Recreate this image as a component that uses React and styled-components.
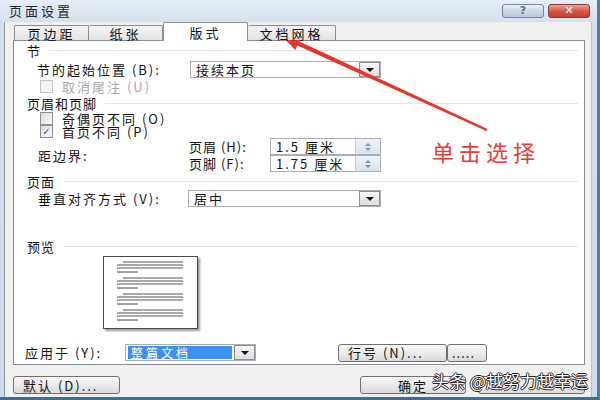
import React from 'react';
import styled, { createGlobalStyle } from 'styled-components';

const GlobalStyle = createGlobalStyle`
  body {
    margin: 0;
    font-family: "Noto Sans CJK SC", "Liberation Sans", sans-serif;
    color: #111;
    line-height: 1.1;
  }
`

const Window = styled.div`
  position: relative;
  width: 600px;
  height: 400px;
  box-sizing: border-box;
  display: flex;
  flex-direction: column;
  overflow: hidden;
  background: linear-gradient(#e6eef7, #d4e0ec 24px, #cfdbe8);
  border-right: 3px solid #4d7fa6;
  border-bottom: 3px solid #3c6e92;
`
const TitleBar = styled.div`
  flex: none;
  height: 22px;
  display: flex;
  align-items: center;
  padding: 0 7px 0 9px;
`
const Title = styled.span`
  flex: 1;
  font-size: 13px;
  letter-spacing: 3px;
  color: #1b2633;
`
const CaptionButton = styled.div`
  width: 40px;
  height: 12px;
  margin-left: 4px;
  display: flex;
  align-items: center;
  justify-content: center;
  border: 1px solid ${p => p.$close ? '#8a3a30' : '#71859a'};
  border-radius: 3px;
  background: ${p => p.$close
    ? 'linear-gradient(#eaa497, #d35b48 50%, #c23f2c)'
    : 'linear-gradient(#eef3f8, #cbd8e6 50%, #b9c9db)'};
  color: ${p => p.$close ? '#fff' : '#5d6f84'};
  font: bold 11px/12px "DejaVu Sans", sans-serif;
`
const Client = styled.div`
  flex: 1;
  display: flex;
  flex-direction: column;
  margin: 0 5px 0 4px;
  padding: 0 6px 0 8px;
  background: #f0f0f0;
  border-left: 1px solid #8d949c;
  border-right: 1px solid #b9c3cd;
`
const TabStrip = styled.div`
  display: flex;
  align-items: flex-end;
  height: 18px;
  padding-left: 1px;
  position: relative;
  z-index: 1;
`
const Tab = styled.div`
  width: ${p => p.$w}px;
  height: ${p => p.$active ? 19 : 15}px;
  margin-bottom: ${p => p.$active ? -1 : 0}px;
  box-sizing: border-box;
  display: flex;
  align-items: center;
  justify-content: center;
  border: 1px solid #898c95;
  border-bottom: none;
  border-left-width: ${p => p.$first || p.$active ? 1 : 0}px;
  border-radius: 2px 2px 0 0;
  background: ${p => p.$active ? '#fff' : 'linear-gradient(#f4f4f4, #e3e3e3)'};
  font-size: 13px;
  line-height: 13px;
  letter-spacing: 3px;
  padding-top: ${p => p.$active ? 0 : 1}px;
`
const Panel = styled.div`
  height: 325px;
  box-sizing: border-box;
  display: flex;
  flex-direction: column;
  padding: 2px 6px 0 13px;
  background: #fff;
  border: 1px solid #898c95;
`
const SectionHeader = styled.div`
  display: flex;
  align-items: center;
  height: 14px;
  margin-top: ${p => p.$top || 0}px;
  font-size: 13px;
  line-height: 13px;
  letter-spacing: 1px;
  &::after {
    content: '';
    flex: 1;
    height: 1px;
    margin-left: 8px;
    background: #dfe4e8;
  }
`
const Row = styled.div`
  display: flex;
  align-items: center;
  height: ${p => p.$h}px;
  margin-top: ${p => p.$top || 0}px;
  padding-left: ${p => p.$indent || 0}px;
  margin-left: ${p => p.$shift || 0}px;
`
const Label = styled.span`
  flex: none;
  width: ${p => p.$w ? `${p.$w}px` : 'auto'};
  font-size: 13px;
  line-height: 13px;
  letter-spacing: ${p => p.$ls ?? 2}px;
  white-space: nowrap;
  color: ${p => p.$disabled ? '#a7a7a7' : '#111'};
`
const CheckBox = styled.span`
  flex: none;
  width: 11px;
  height: 11px;
  margin: 0 9px 0 3px;
  display: flex;
  align-items: center;
  justify-content: center;
  border: 1px solid ${p => p.$disabled ? '#c4c4c4' : '#8e8f8f'};
  background: ${p => p.$disabled ? '#f4f4f4' : 'linear-gradient(135deg, #dcdcdc, #fbfbfb)'};
  color: #3b579a;
  font: bold 10px/11px "DejaVu Sans", sans-serif;
`
const Combo = styled.div`
  flex: none;
  display: flex;
  align-items: center;
  width: ${p => p.$w}px;
  height: 17px;
  box-sizing: border-box;
  border: 1px solid #a9adb4;
  background: #fff;
`
const ComboText = styled.span`
  flex: 1;
  padding-left: 5px;
  font-size: 13px;
  line-height: 13px;
  letter-spacing: 2px;
  white-space: nowrap;
`
const Selected = styled.span`
  flex: 1;
  align-self: stretch;
  margin: 1px 2px;
  padding-left: 3px;
  background: #3d8ff0;
  color: #fff;
  font-size: 12px;
  letter-spacing: 3px;
  line-height: 13px;
  white-space: nowrap;
`
const DropButton = styled.span`
  flex: none;
  width: 21px;
  height: 15px;
  box-sizing: border-box;
  display: flex;
  align-items: center;
  justify-content: center;
  border: 1px solid #8d8d8d;
  background: linear-gradient(#f7f7f7, #dedede);
  &::before {
    content: '';
    border-left: 4px solid transparent;
    border-right: 4px solid transparent;
    border-top: 4px solid #111;
  }
`
const Spin = styled(Combo)`
  width: 111px;
`
const SpinButtons = styled.span`
  flex: none;
  width: 24px;
  height: 15px;
  display: flex;
  flex-direction: column;
  align-items: center;
  justify-content: center;
  gap: 2px;
  background: linear-gradient(#eef3f8, #d9e3ee);
  border-left: 1px solid #c5ced8;
`
const SpinArrow = styled.span`
  border-left: 3px solid transparent;
  border-right: 3px solid transparent;
  ${p => p.$down ? 'border-top' : 'border-bottom'}: 3px solid #7a92ad;
`
const MarginGroup = styled.div`
  display: flex;
  align-items: center;
  padding-left: 11px;
`
const MarginRows = styled.div`
  display: flex;
  flex-direction: column;
`
const PreviewPage = styled.div`
  width: 93px;
  height: 71px;
  margin: 3px 0 0 76px;
  border: 1px solid #4a4a4a;
  background: #fff;
  box-shadow: 2px 2px 2px #9a9a9a;
`
const PushButton = styled.div`
  flex: none;
  width: ${p => p.$w}px;
  height: 18px;
  box-sizing: border-box;
  display: flex;
  align-items: center;
  justify-content: ${p => p.$center ? 'center' : 'flex-start'};
  padding-left: ${p => p.$center ? 0 : p.$pad ?? 9}px;
  margin-left: ${p => p.$left || 0}px;
  border: 1px solid #707070;
  border-radius: 3px;
  background: linear-gradient(#f7f7f7, #ebebeb 50%, #dadada);
  font-size: 13px;
  line-height: 13px;
  letter-spacing: ${p => p.$ls ?? 2}px;
  white-space: nowrap;
  overflow: hidden;
`
const Footer = styled.div`
  display: flex;
  align-items: flex-start;
  justify-content: space-between;
  padding-top: 11px;
`
const FooterGroup = styled.div`
  display: flex;
  gap: 12px;
`
const Annotation = styled.span`
  position: absolute;
  left: 432px;
  top: 139px;
  font-size: 22px;
  line-height: 24px;
  letter-spacing: 5px;
  color: #ec3b33;
`
const Watermark = styled.span`
  position: absolute;
  left: 432px;
  top: 371px;
  font-size: 17px;
  line-height: 20px;
  color: #fff;
  white-space: nowrap;
  text-shadow: 1px 0 0 #222, -1px 0 0 #222, 0 1px 0 #222, 0 -1px 0 #222;
`
const Overlay = styled.svg`
  position: absolute;
  left: 0;
  top: 0;
  pointer-events: none;
`

function PageLines() {
  const groups = [0, 1, 2, 3];
  return (
    <svg width="93" height="71" viewBox="0 0 93 71">
      {groups.map(g => {
        const y = 5 + g * 16;
        return (
          <g key={g} stroke="#555" strokeWidth="1.1">
            <line x1="19" x2="79" y1={y} y2={y} />
            <line x1="13" x2="79" y1={y + 3} y2={y + 3} />
            <line x1="13" x2="79" y1={y + 6} y2={y + 6} />
            <line x1="13" x2="34" y1={y + 10} y2={y + 10} />
          </g>
        );
      })}
    </svg>
  );
}

function SpinBox({value}) {
  return (
    <Spin>
      <ComboText>{value}</ComboText>
      <SpinButtons>
        <SpinArrow />
        <SpinArrow $down />
      </SpinButtons>
    </Spin>
  );
}

export default function App() {
  return (
    <Window>
      <GlobalStyle />
      <TitleBar>
        <Title>页面设置</Title>
        <CaptionButton>?</CaptionButton>
        <CaptionButton $close>✕</CaptionButton>
      </TitleBar>
      <Client>
        <TabStrip>
          <Tab $w={75} $first>页边距</Tab>
          <Tab $w={74}>纸张</Tab>
          <Tab $w={85} $active>版式</Tab>
          <Tab $w={88}>文档网格</Tab>
        </TabStrip>
        <Panel>
          <SectionHeader>节</SectionHeader>
          <Row $h={17} $top={4} $indent={10}>
            <Label $w={153}>节的起始位置 (B):</Label>
            <Combo $w={191}>
              <ComboText>接续本页</ComboText>
              <DropButton />
            </Combo>
          </Row>
          <Row $h={14} $top={1} $indent={10}>
            <CheckBox $disabled />
            <Label $disabled>取消尾注 (U)</Label>
          </Row>

          <SectionHeader $top={3}>页眉和页脚</SectionHeader>
          <Row $h={13} $top={2} $indent={10}>
            <CheckBox />
            <Label>奇偶页不同 (O)</Label>
          </Row>
          <Row $h={13} $indent={10}>
            <CheckBox>✓</CheckBox>
            <Label>首页不同 (P)</Label>
          </Row>
          <MarginGroup>
            <Label $w={151}>距边界:</Label>
            <MarginRows>
              <Row $h={17}>
                <Label $w={81} $ls={1}>页眉 (H):</Label>
                <SpinBox value="1.5 厘米" />
              </Row>
              <Row $h={17}>
                <Label $w={81} $ls={1}>页脚 (F):</Label>
                <SpinBox value="1.75 厘米" />
              </Row>
            </MarginRows>
          </MarginGroup>

          <SectionHeader $top={2}>页面</SectionHeader>
          <Row $h={17} $top={2} $indent={11}>
            <Label $w={150}>垂直对齐方式 (V):</Label>
            <Combo $w={193}>
              <ComboText>居中</ComboText>
              <DropButton />
            </Combo>
          </Row>

          <SectionHeader $top={32}>预览</SectionHeader>
          <PreviewPage>
            <PageLines />
          </PreviewPage>

          <Row $h={17} $top={15} $shift={-2}>
            <Label $w={100}>应用于 (Y):</Label>
            <Combo $w={131}>
              <Selected>整篇文档</Selected>
              <DropButton />
            </Combo>
            <PushButton $w={109} $left={82}>行号 (N)...</PushButton>
            <PushButton $w={40} $pad={4} $ls={1}>.....</PushButton>
          </Row>
        </Panel>
        <Footer>
          <PushButton $w={107}>默认 (D)...</PushButton>
          <FooterGroup>
            <PushButton $w={106} $center>确定</PushButton>
            <PushButton $w={107} $center />
          </FooterGroup>
        </Footer>
      </Client>

      <Annotation>单击选择</Annotation>
      <Overlay width="600" height="400" viewBox="0 0 600 400">
        <polygon
          fill="#e5362c"
          points="487.6,128.9 299.4,41.6 301.6,36.9 282,36 295.3,50.1 297.5,45.4 486.4,131.1"
        />
      </Overlay>
      <Watermark>头条 @越努力越幸运</Watermark>
    </Window>
  );
}
